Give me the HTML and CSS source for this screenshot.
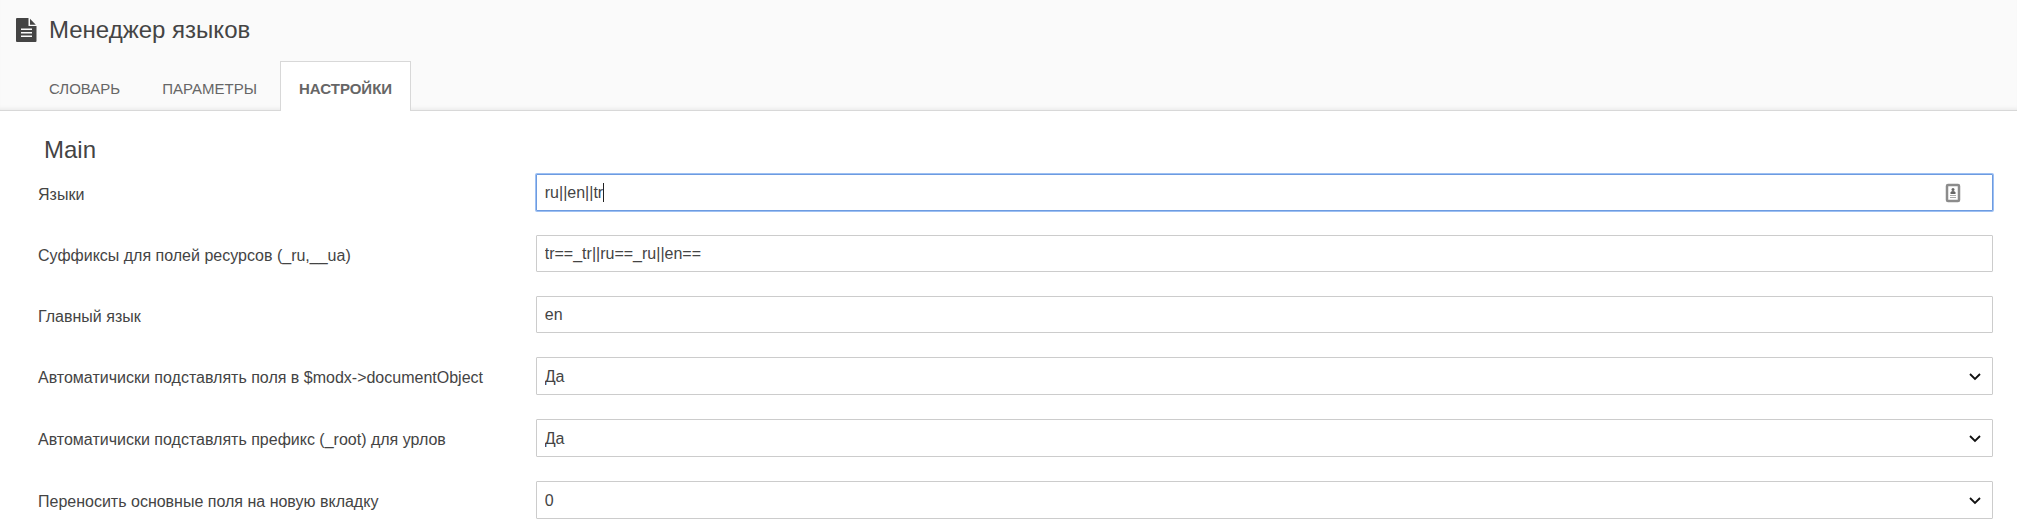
FILE: index.html
```html
<!DOCTYPE html>
<html lang="ru">
<head>
<meta charset="utf-8">
<title>Менеджер языков</title>
<link rel="stylesheet" href="styles.css">
</head>
<body>
<header class="header">
  <h1 class="title">
    <svg class="title-icon" viewBox="0 0 21 24" aria-hidden="true">
      <path fill="currentColor" fill-rule="evenodd" d="M1 0H12.500V8H20.500V23Q20.500 24 19.500 24H1Q0 24 0 23V1Q0 0 1 0ZM5 10.500V12H16V10.500ZM5 14V15.500H16V14ZM5 17.500V19H16V17.500Z"/>
      <path fill="currentColor" d="M14 .8L19.800 6.800H14Z"/>
    </svg>
    Менеджер языков
  </h1>
  <nav class="tabs">
    <a class="tab" href="#dictionary">СЛОВАРЬ</a>
    <a class="tab" href="#params">ПАРАМЕТРЫ</a>
    <a class="tab tab-active" href="#settings" aria-current="page">НАСТРОЙКИ</a>
  </nav>
</header>
<main class="content">
  <h2 class="section-title">Main</h2>
  <form class="form">
    <div class="row">
      <label class="label" for="langs">Языки</label>
      <div class="field">
        <input class="control control-focus" id="langs" type="text" value="ru||en||tr" autocomplete="off" autofocus>
        <span class="caret" aria-hidden="true"><span class="caret-text">ru||en||tr</span></span>
        <svg class="autofill" viewBox="0 0 16 20" aria-hidden="true">
          <rect x="2" y="2" width="12" height="16" rx="1" fill="#fff" stroke="#8c8c8c" stroke-width="2.500"/>
          <circle cx="8" cy="6.500" r="1.500" fill="#666"/>
          <path d="M5.500 11V9.500Q5.500 8 8 8T10.500 9.500V11Z" fill="#666"/>
          <path d="M5 12.500H11M5 14.500H11" stroke="#aaa"/>
        </svg>
      </div>
    </div>
    <div class="row">
      <label class="label" for="suffixes">Суффиксы для полей ресурсов (_ru,__ua)</label>
      <div class="field"><input class="control" id="suffixes" type="text" value="tr==_tr||ru==_ru||en=="></div>
    </div>
    <div class="row">
      <label class="label" for="main-lang">Главный язык</label>
      <div class="field"><input class="control" id="main-lang" type="text" value="en"></div>
    </div>
    <div class="row">
      <label class="label" for="auto-fields">Автоматичиски подставлять поля в $modx-&gt;documentObject</label>
      <div class="field">
        <select class="control select" id="auto-fields"><option>Да</option><option>Нет</option></select>
        <svg class="chevron" viewBox="0 0 12 8" aria-hidden="true"><path d="M1 1L6 6L11 1" fill="none" stroke="#111" stroke-width="1.800"/></svg>
      </div>
    </div>
    <div class="row">
      <label class="label" for="auto-prefix">Автоматичиски подставлять префикс (_root) для урлов</label>
      <div class="field">
        <select class="control select" id="auto-prefix"><option>Да</option><option>Нет</option></select>
        <svg class="chevron" viewBox="0 0 12 8" aria-hidden="true"><path d="M1 1L6 6L11 1" fill="none" stroke="#111" stroke-width="1.800"/></svg>
      </div>
    </div>
    <div class="row">
      <label class="label" for="move-fields">Переносить основные поля на новую вкладку</label>
      <div class="field">
        <select class="control select" id="move-fields"><option>0</option><option>1</option></select>
        <svg class="chevron" viewBox="0 0 12 8" aria-hidden="true"><path d="M1 1L6 6L11 1" fill="none" stroke="#111" stroke-width="1.800"/></svg>
      </div>
    </div>
  </form>
</main>
</body>
</html>
```

FILE: styles.css
```css
* {
  box-sizing: border-box;
}

body {
  margin: 0;
  background: #fff;
  color: #444;
  font: 16px/24px "Liberation Sans", Arial, sans-serif;
}

.header {
  padding-top: 14px;
  background: #fafafa;
  border-bottom: 1px solid #d8d8d8;
  box-shadow: inset 0 -4px 4px -3px rgba(0, 0, 0, 0.08);
}

.title {
  display: flex;
  align-items: center;
  gap: 12px;
  margin: 0;
  padding-left: 16px;
  font-size: 24px;
  font-weight: 400;
  line-height: 32px;
}

.title-icon {
  width: 21px;
  height: 24px;
}

.tabs {
  display: flex;
  gap: 4px;
  margin: 15px 0 -1px;
  padding-left: 30px;
}

.tab {
  padding: 15px 18px 10px;
  border: 1px solid transparent;
  border-bottom: 0;
  color: #666;
  font-size: 15px;
  text-decoration: none;
}

.tab-active {
  background: #fff;
  border-color: #d8d8d8;
  font-weight: 700;
}

.content {
  padding: 23px 24px 0 38px;
}

.section-title {
  margin: 0 0 8px;
  padding-left: 6px;
  font-size: 24px;
  font-weight: 400;
  line-height: 32px;
}

.form {
  display: grid;
  gap: 24px;
}

.row {
  display: grid;
  grid-template-columns: minmax(0, 1fr) minmax(0, 3fr);
  column-gap: 12px;
}

.label {
  padding-top: 9px;
}

.field {
  position: relative;
  display: grid;
}

.control {
  width: 100%;
  height: 37px;
  margin: 0;
  padding: 0 8px;
  border: 1px solid #ccc;
  border-radius: 1px;
  outline: 0;
  background: #fff;
  color: #444;
  font: inherit;
}

.control-focus {
  border-color: #6d9be0;
  box-shadow: 0 0 0 1px #9dc0f3;
  caret-color: transparent;
}

.select {
  height: 38px;
  padding-top: 2px;
  appearance: none;
}

.caret {
  position: absolute;
  top: 9px;
  left: 9px;
  height: 19px;
  border-right: 1px solid #222;
  pointer-events: none;
}

.caret-text {
  visibility: hidden;
}

.autofill {
  position: absolute;
  top: 9px;
  right: 32px;
  width: 16px;
  height: 20px;
}

.chevron {
  position: absolute;
  top: 16px;
  right: 12px;
  width: 12px;
  height: 8px;
  pointer-events: none;
}
```
